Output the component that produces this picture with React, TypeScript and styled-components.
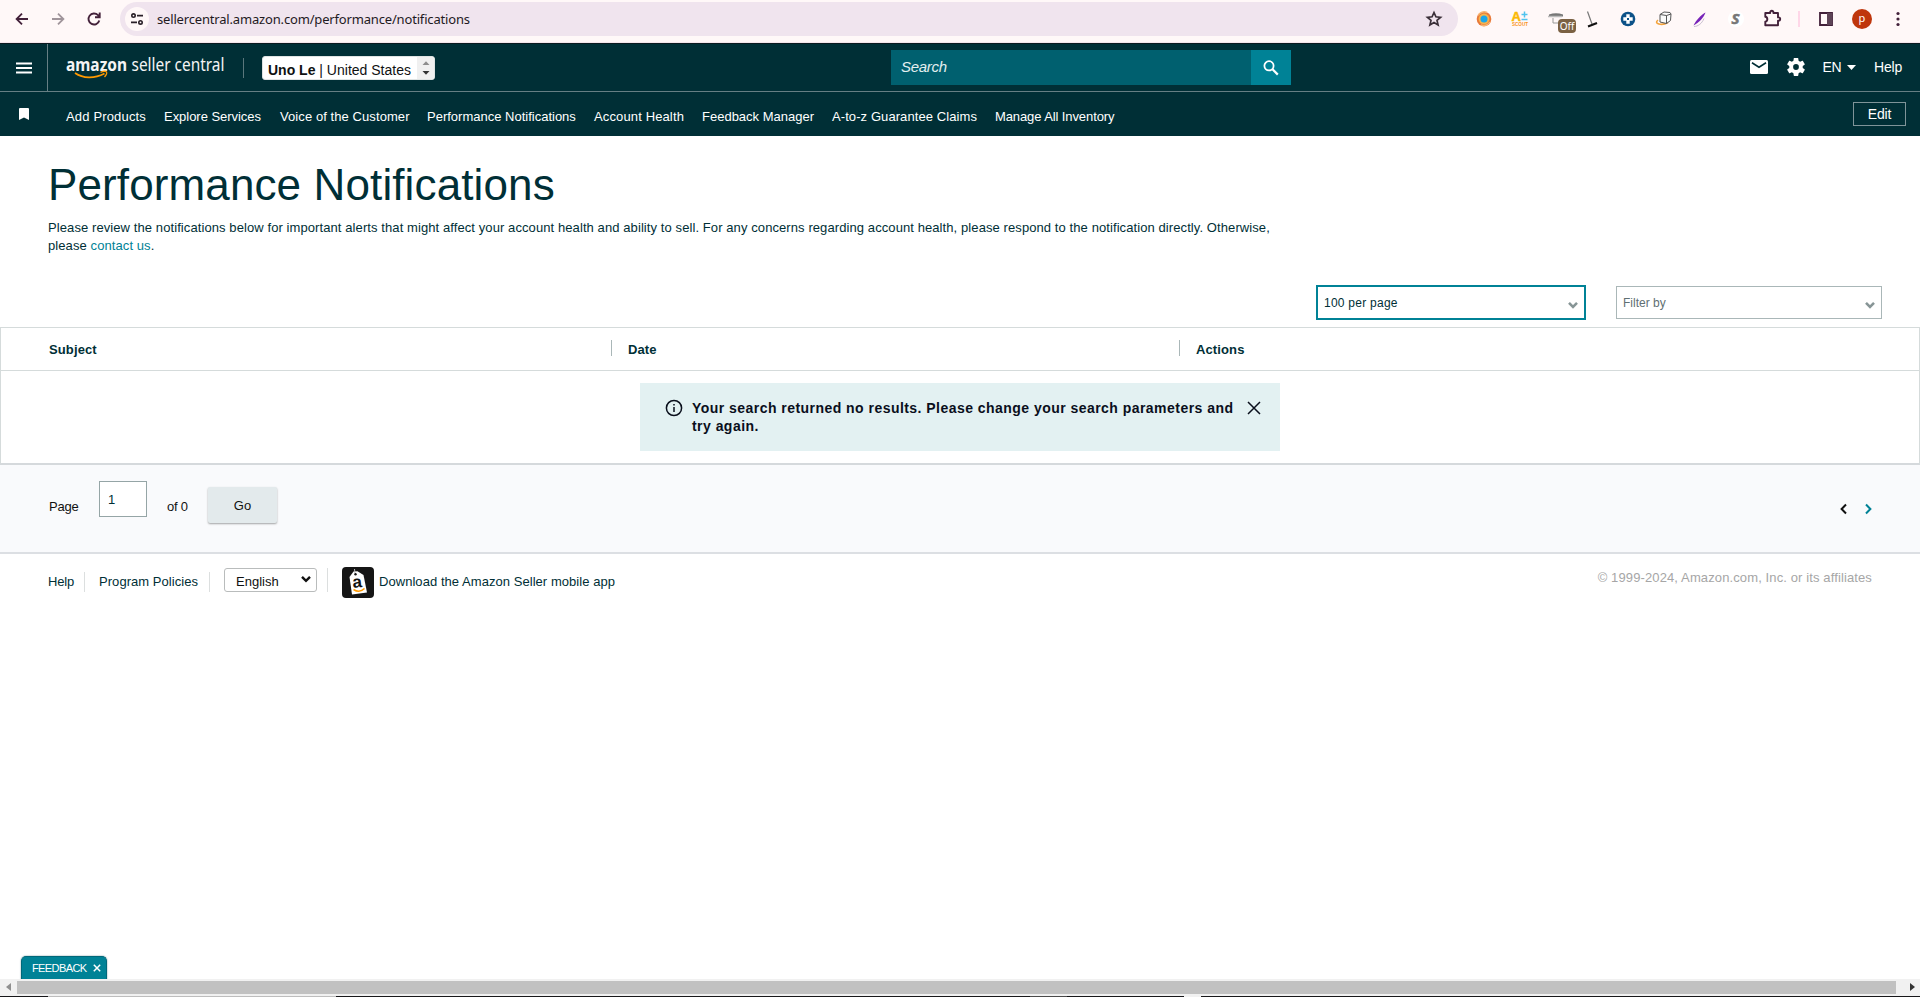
import React from "react";
import styled, { createGlobalStyle } from "styled-components";

const Global = createGlobalStyle`
  * { box-sizing: border-box; }
  body { margin: 0; background: #fff; overflow: hidden; }
  svg { display: block; flex: none; }
`;

const ink = "#002f36";
const teal = "#008296";

const Screen = styled.div`
  width: 1920px;
  height: 997px;
  display: flex;
  flex-direction: column;
  background: #fff;
  color: ${ink};
  font: 13px/18px "Liberation Sans", Arial, sans-serif;
  white-space: nowrap;
`;

const Txt = styled.span<{ $ls?: number }>`
  letter-spacing: ${(p) => p.$ls ?? 0}px;
`;

/* browser bar */
const BrowserBar = styled.div`
  height: 43px;
  flex: none;
  display: flex;
  align-items: flex-start;
  background: #fff8f8;
  border-bottom: 1px solid #f3e6ec;
`;
const NavButtons = styled.div`
  display: flex;
  width: 120px;
  padding: 9px 0 0 12px;
  gap: 16px;
`;
const AddressBar = styled.div`
  width: 1338px;
  height: 34px;
  margin-top: 2px;
  border-radius: 17px;
  background: #f0e4ee;
  display: flex;
  align-items: center;
  padding: 0 14px 0 5px;
`;
const SiteInfo = styled.div`
  width: 24px;
  height: 24px;
  border-radius: 50%;
  background: #fff8f8;
  display: grid;
  place-items: center;
  margin-right: 8px;
`;
const Url = styled.div`
  flex: 1;
  font: 13px/20px "Noto Sans", sans-serif;
  letter-spacing: -0.17px;
  color: #1f1a1e;
`;
const Extensions = styled.div`
  display: flex;
  padding-left: 8px;
  height: 38px;
`;
const ExtCell = styled.div<{ $w?: number }>`
  width: ${(p) => p.$w ?? 36}px;
  display: grid;
  place-items: center;
  position: relative;
`;
const OffBadge = styled.span`
  position: absolute;
  left: 20px;
  top: 19px;
  width: 18px;
  height: 14px;
  border-radius: 4px;
  background: #7b6143;
  color: #fff;
  font: 10px/14px "Noto Sans", sans-serif;
  text-align: center;
`;
const ExtDivider = styled.i`
  width: 2px;
  height: 16px;
  background: #ffd7e8;
`;
const Avatar = styled.div`
  width: 20px;
  height: 20px;
  border-radius: 50%;
  background: #bf360c;
  color: #fff;
  font: 11px/18px "Noto Sans", sans-serif;
  text-align: center;
`;

/* seller central header */
const TopBar = styled.header`
  height: 49px;
  flex: none;
  display: flex;
  align-items: center;
  background: ${ink};
  border-bottom: 1px solid #667f84;
  border-top: 1px solid #0b1a20;
  color: #fff;
`;
const MenuButton = styled.div`
  width: 48px;
  height: 47px;
  border-right: 1px solid #667f84;
  display: grid;
  place-items: center;
`;
const LogoWrap = styled.div`
  width: 196px;
  height: 20px;
  border-right: 1px solid #5a777c;
  padding-left: 18px;
  svg { margin-top: -6px; overflow: visible; }
`;
const AccountPicker = styled.div`
  margin-left: 18px;
  width: 173px;
  height: 24px;
  border-radius: 3px;
  background: #fff;
  color: #0f1111;
  display: flex;
  align-items: stretch;
  overflow: hidden;
  border: 1px solid #dfe3e3;
  font-size: 14px;
`;
const AccountName = styled.div`
  flex: 1;
  padding: 4px 0 0 5px;
  line-height: 18px;
`;
const Spinner = styled.div`
  width: 17px;
  background: #f0f0f0;
  display: grid;
  place-items: center;
`;
const SearchBox = styled.div`
  margin-left: 456px;
  width: 360px;
  height: 35px;
  background: #00606f;
  padding-left: 10px;
  font: italic 15px/34px "Liberation Sans", Arial, sans-serif;
  color: #e3eff0;
`;
const SearchButton = styled.div`
  width: 40px;
  height: 35px;
  background: ${teal};
  display: grid;
  place-items: center;
`;
const HeaderTools = styled.div`
  flex: 1;
  display: flex;
  align-items: center;
  justify-content: flex-end;
  padding: 0 18px 1px 0;
  font-size: 14px;
`;
const Language = styled.div`
  display: flex;
  align-items: center;
  gap: 6px;
  margin: 0 18px 0 18px;
`;
const Settings = styled.div`
  margin-left: 19px;
`;
const QuickNav = styled.nav`
  height: 44px;
  flex: none;
  display: flex;
  align-items: center;
  background: ${ink};
  color: #fff;
`;
const Bookmark = styled.div`
  width: 66px;
  padding: 0 0 1px 19px;
`;
const QuickLink = styled.a<{ $w: number; $ls: number }>`
  width: ${(p) => p.$w}px;
  padding-top: 5px;
  letter-spacing: ${(p) => p.$ls}px;
`;
const EditButton = styled.div`
  margin: 0 14px 0 auto;
  width: 53px;
  height: 24px;
  border: 1px solid #7f9499;
  font-size: 14px;
  line-height: 23px;
  text-align: center;
  letter-spacing: -0.2px;
`;

/* content */
const Title = styled.h1`
  margin: 0;
  padding: 22px 0 0 48px;
  font-size: 44px;
  font-weight: 400;
  line-height: 53px;
  letter-spacing: 0.12px;
`;
const Intro = styled.p`
  margin: 8px 0 30px;
  padding-left: 48px;
  letter-spacing: 0.089px;
  a { color: ${teal}; }
`;
const Filters = styled.div`
  display: flex;
  justify-content: flex-end;
  align-items: center;
  gap: 30px;
  padding-right: 38px;
  height: 35px;
  margin-bottom: 7px;
`;
const Select = styled.div<{ $active?: boolean }>`
  width: ${(p) => (p.$active ? 270 : 266)}px;
  height: ${(p) => (p.$active ? 35 : 33)}px;
  border: ${(p) => (p.$active ? `2px solid ${teal}` : "1px solid #aab7b8")};
  color: ${(p) => (p.$active ? ink : "#5f7073")};
  padding: 0 6px 0 6px;
  display: flex;
  align-items: center;
  justify-content: space-between;
  font-size: 12px;
  svg { margin-top: 4px; }
`;
const Table = styled.section`
  border: 1px solid #d5dbdb;
  border-bottom: 2px solid #d5d9dc;
  height: 138px;
  flex: none;
`;
const HeadRow = styled.div`
  display: grid;
  grid-template-columns: 610px 568px 1fr;
  height: 43px;
  align-items: center;
  border-bottom: 1px solid #d5dbdb;
  font-weight: 700;
`;
const HeadCell = styled.div<{ $first?: boolean }>`
  height: 16px;
  line-height: 19px;
  border-left: ${(p) => (p.$first ? "0" : "1px solid #aab7b8")};
  padding-left: ${(p) => (p.$first ? 48 : 16)}px;
  letter-spacing: 0.12px;
  margin-top: -3px;
`;
const Notice = styled.div`
  width: 640px;
  height: 68px;
  margin: 12px auto 0 639px;
  background: #e3f1f2;
  color: #0a0f1c;
  display: flex;
  align-items: flex-start;
  padding: 16px 18px 0 25px;
  font-weight: 700;
  font-size: 14px;
`;
const NoticeText = styled.div`
  width: 555px;
  margin-left: 9px;
  letter-spacing: 0.46px;
`;
const Pager = styled.div`
  height: 89px;
  flex: none;
  display: flex;
  align-items: flex-start;
  background: #f9fafc;
  border-bottom: 2px solid #dcdfe3;
  color: #111;
  padding-left: 49px;
`;
const PagerLabel = styled.span<{ $w: number }>`
  width: ${(p) => p.$w}px;
  padding-top: 33px;
  letter-spacing: -0.2px;
`;
const PageInput = styled.div`
  width: 48px;
  height: 36px;
  margin: 16px 20px 0 0;
  border: 1px solid #95a5a6;
  background: #fff;
  color: ${ink};
  padding: 9px 0 0 8px;
`;
const GoButton = styled.div`
  width: 69px;
  height: 36px;
  margin-top: 22px;
  border-radius: 2px;
  background: #e3eaec;
  box-shadow: 0 1px 2px rgba(0, 0, 0, 0.35);
  line-height: 37px;
  text-align: center;
`;
const PageArrows = styled.div`
  display: flex;
  gap: 18px;
  margin: 38px 48px 0 auto;
`;
const Footer = styled.footer`
  display: flex;
  align-items: flex-start;
  padding: 13px 48px 0;
  flex: 1;
`;
const FootItem = styled.div<{ $w: number; $pad?: number }>`
  width: ${(p) => p.$w}px;
  padding-left: ${(p) => p.$pad ?? 0}px;
  height: 20px;
  margin-top: 5px;
  border-right: 1px solid #dcdfdf;
  line-height: 20px;
`;
const LangSelect = styled.div`
  width: 93px;
  height: 24px;
  margin: 1px 10px 0 14px;
  border: 1px solid #b9bcbc;
  border-radius: 3px;
  color: #0f1111;
  display: flex;
  align-items: center;
  justify-content: space-between;
  padding: 4px 5px 0 11px;
  overflow: hidden;
  svg { margin-top: -6px; }
`;
const FootDivider = styled.i`
  width: 1px;
  height: 24px;
  margin: 1px 14px 0 0;
  background: #dcdfdf;
`;
const AppLink = styled.div`
  display: flex;
  gap: 5px;
  letter-spacing: 0.05px;
  line-height: 30px;
`;
const Copyright = styled.div`
  margin: 1px 0 0 auto;
  color: #a6a6a6;
  line-height: 20px;
  letter-spacing: 0.118px;
`;
const FeedbackTab = styled.div`
  width: 86px;
  height: 23px;
  margin-left: 21px;
  flex: none;
  border: 1px solid #00687a;
  border-bottom: 0;
  border-radius: 5px 5px 0 0;
  background: ${teal};
  color: #fff;
  box-shadow: 0 0 1px 1px #d8e2e3;
  display: flex;
  align-items: center;
  gap: 6px;
  padding-left: 10px;
  font-size: 11px;
`;
const Scrollbar = styled.div`
  height: 17px;
  flex: none;
  display: flex;
  align-items: center;
  justify-content: space-between;
  background: #f1f1f1;
  padding: 0 5px 1px 6px;
`;
const Thumb = styled.div`
  width: 1879px;
  flex: none;
  height: 13px;
  background: #c1c1c1;
  margin: 0 auto 0 6px;
`;
const TaskbarEdge = styled.div`
  height: 1px;
  flex: none;
  background: linear-gradient(90deg, #17171a 48px, #bdbdbd 48px 336px, #17171a 336px 1030px, #4a4a4a 1030px 1067px, #17171a 1067px 1184px, #f1f1f1 1184px 1201px, #17171a 1201px);
`;

const Chevron = ({ color = "#879596", sw = 2.6 }) => (
  <svg width="10" height="8" viewBox="0 0 10 8" fill="none" stroke={color} strokeWidth={sw}>
    <path d="M1 1.8 5 5.8 9 1.8" />
  </svg>
);

const Logo = () => (
  <svg width="162" height="32" viewBox="0 0 162 32" fill="#f4f4f4" fontFamily="Noto Sans, sans-serif">
    <text x="0" y="18.5" fontSize="18" fontWeight="700" textLength="61" lengthAdjust="spacingAndGlyphs">amazon</text>
    <text x="65.500" y="18.5" fontSize="18" textLength="93" lengthAdjust="spacingAndGlyphs">seller central</text>
    <path d="M9 21C17 26.500 28 27 38.500 21.500" fill="none" stroke="#f90" strokeWidth="1.700" />
    <path d="M34.500 20.300C37 19.300 40 19.200 40.500 20S39.800 23.500 38.500 25" fill="none" stroke="#f90" strokeWidth="1.300" />
  </svg>
);

const links: [string, number, number][] = [
  ["Add Products", 98, 0.163],
  ["Explore Services", 116, -0.034],
  ["Voice of the Customer", 147, 0.08],
  ["Performance Notifications", 167, 0],
  ["Account Health", 108, 0.131],
  ["Feedback Manager", 130, 0],
  ["A-to-z Guarantee Claims", 163, 0.085],
  ["Manage All Inventory", 125, -0.1],
];

export default function App() {
  return (
    <Screen>
      <Global />
      <BrowserBar>
        <NavButtons>
          <svg width="20" height="20" viewBox="0 0 20 20" fill="none" stroke="#43213a" strokeWidth="1.800"><path d="M16 10H5M10 4.600 4.600 10l5.400 5.400" /></svg>
          <svg width="20" height="20" viewBox="0 0 20 20" fill="none" stroke="#a0959b" strokeWidth="1.800"><path d="M4 10h11M10 4.600 15.400 10 10 15.400" /></svg>
          <svg width="20" height="20" viewBox="0 0 20 20" fill="none" stroke="#43213a" strokeWidth="1.900"><path d="M15.300 11.500A5.500 5.500 0 1 1 14 6.200L15.600 8M15.700 3.500V8.200H11" /></svg>
        </NavButtons>
        <AddressBar>
          <SiteInfo>
            <svg width="14" height="14" viewBox="0 0 14 14" fill="none" stroke="#2a2028" strokeWidth="1.600"><circle cx="3.500" cy="3.600" r="1.700" /><path d="M7 3.600h6M1 10.400h6" /><circle cx="10.500" cy="10.400" r="1.700" /></svg>
          </SiteInfo>
          <Url>sellercentral.amazon.com/performance/notifications</Url>
          <svg width="20" height="20" viewBox="0 0 20 20" fill="none" stroke="#3a2f38" strokeWidth="1.700"><path d="m10 3.500 1.900 4.300 4.700.5-3.600 3.100 1.100 4.600L10 13.600 5.900 16 7 11.400 3.400 8.300l4.700-.5z" /></svg>
        </AddressBar>
        <Extensions>
          <ExtCell>
            <svg width="16" height="16" viewBox="0 0 16 16"><circle cx="8" cy="8" r="7.300" fill="#e8793a" /><circle cx="8" cy="8" r="5.400" fill="#f7b34d" /><circle cx="8" cy="8" r="3.500" fill="#1ba6ea" /><path d="M2 4.500a7 7 0 0 1 9-3M14 11a7 7 0 0 1-9 3" stroke="#f7b573" strokeWidth="1.500" fill="none" /></svg>
          </ExtCell>
          <ExtCell>
            <svg width="18" height="18" viewBox="0 0 18 18" fontFamily="Liberation Sans, sans-serif" fontWeight="700"><text x="0.500" y="11" fontSize="13" fill="#fbb904" stroke="#fbb904" strokeWidth=".5">A</text><path d="M10.500 4.500h6M13.500 1.500v6M10.500 9.500h6" stroke="#4fc3ee" strokeWidth="1.500" /><text x="1" y="16" fontSize="5.500" textLength="16" lengthAdjust="spacingAndGlyphs" fill="#f9931b">SCOUT</text></svg>
          </ExtCell>
          <ExtCell>
            <svg width="18" height="18" viewBox="0 0 18 18"><path d="M2 4.500Q9 2 16 4.500v2H2z" fill="#777" /><path d="M1 6.500h14" stroke="#bbb" strokeWidth="1.500" /><path d="M6 8v5h8" stroke="#999" fill="none" /></svg>
            <OffBadge>Off</OffBadge>
          </ExtCell>
          <ExtCell>
            <svg width="18" height="18" viewBox="0 0 18 18"><path d="M4.500 1.500 9 14" stroke="#777" strokeWidth="1.200" /><path d="M5 16.500 14 13" stroke="#111" strokeWidth="2.200" /></svg>
          </ExtCell>
          <ExtCell>
            <svg width="16" height="16" viewBox="0 0 16 16"><circle cx="8" cy="8" r="7.300" fill="#0d5288" /><path d="M6.300 3.300h3.400v3h3v3.400h-3v3H6.300v-3h-3V6.300h3z" fill="#fff" /><path d="M7 7h2v2H7z" fill="#0d5288" /></svg>
          </ExtCell>
          <ExtCell>
            <svg width="18" height="18" viewBox="0 0 18 18" fill="none"><path d="M3 10c-5 4 4 6 10 2.500" stroke="#f3a33c" strokeWidth="1.600" /><path d="M5 4.500 9 2l6 .5 1 1.500-.5 6.500-4 3L5 12zM5 4.500l6.500 1L16 4M11.500 5.500v8" fill="#fafafa" stroke="#555" /></svg>
          </ExtCell>
          <ExtCell>
            <svg width="18" height="18" viewBox="0 0 18 18"><path d="M14.500 2.500C10 5 5 10 2.500 15.500 8 12.500 12.500 8 14.500 2.500z" fill="#7723b8" /><path d="M3 16.500c4 0 8-3 10-8" stroke="#cabfd1" fill="none" /></svg>
          </ExtCell>
          <ExtCell>
            <svg width="18" height="18" viewBox="0 0 18 18"><circle cx="9" cy="9" r="8" fill="#fff" /><text x="4.500" y="14" fontFamily="Noto Sans, sans-serif" fontStyle="italic" fontWeight="700" fontSize="15" fill="#777" stroke="#777" strokeWidth=".6">S</text></svg>
          </ExtCell>
          <ExtCell>
            <svg width="20" height="20" viewBox="0 0 20 20" fill="none" stroke="#43213a" strokeWidth="1.900" strokeLinejoin="round"><path d="M3.300 4H8.200V3.300a1.600 1.600 0 0 1 3.200 0V4H16V8.400h.600a1.600 1.600 0 0 1 0 3.200H16V16.300H3.300V12.600c2.700-.3 2.700-4.500 0-4.800z" /></svg>
          </ExtCell>
          <ExtCell $w={18}><ExtDivider /></ExtCell>
          <ExtCell>
            <svg width="16" height="16" viewBox="0 0 16 16"><path d="M2 2h12v12H2z" fill="none" stroke="#43213a" strokeWidth="1.800" /><path d="M9 2h5v12H9z" fill="#5e4457" /></svg>
          </ExtCell>
          <ExtCell><Avatar>p</Avatar></ExtCell>
          <ExtCell>
            <svg width="4" height="16" viewBox="0 0 4 16" fill="#43213a"><circle cx="2" cy="2.500" r="1.600" /><circle cx="2" cy="8" r="1.600" /><circle cx="2" cy="13.500" r="1.600" /></svg>
          </ExtCell>
        </Extensions>
      </BrowserBar>

      <TopBar>
        <MenuButton>
          <svg width="16" height="12" viewBox="0 0 16 12" stroke="#fff" strokeWidth="1.800"><path d="M0 1.500h16M0 6h16M0 10.500h16" /></svg>
        </MenuButton>
        <LogoWrap><Logo /></LogoWrap>
        <AccountPicker>
          <AccountName><b>Uno Le</b> | United States</AccountName>
          <Spinner>
            <svg width="8" height="14" viewBox="0 0 8 14"><path d="M.5 4 4 .3 7.500 4z" fill="#8d8d8d" /><path d="M.5 10 4 13.700 7.500 10z" fill="#333" /></svg>
          </Spinner>
        </AccountPicker>
        <SearchBox><Txt $ls={-0.3}>Search</Txt></SearchBox>
        <SearchButton>
          <svg width="16" height="16" viewBox="0 0 16 16" fill="none" stroke="#fff"><circle cx="6" cy="5.800" r="4.600" strokeWidth="1.800" /><path d="m9.500 9.300 5.300 5.300" strokeWidth="2.200" /></svg>
        </SearchButton>
        <HeaderTools>
          <svg width="18" height="14" viewBox="0 0 18 14"><rect width="18" height="14" rx="1.500" fill="#fff" /><path d="m2 2.800 7 4.400 7-4.400" fill="none" stroke={ink} strokeWidth="1.600" /></svg>
          <Settings>
            <svg width="18" height="18" viewBox="2 2 20 20" fill="#fff"><path d="M19.430 12.980c.04-.32.070-.64.070-.98s-.03-.66-.07-.98l2.110-1.650c.19-.15.240-.42.120-.64l-2-3.460c-.12-.22-.39-.3-.61-.22l-2.490 1c-.52-.4-1.080-.73-1.690-.98l-.38-2.650C14.460 2.180 14.250 2 14 2h-4c-.25 0-.46.180-.49.420l-.38 2.650c-.61.250-1.170.590-1.690.980l-2.490-1c-.23-.09-.49 0-.61.220l-2 3.460c-.13.220-.07.490.120.640l2.110 1.650c-.04.320-.07.650-.07.980s.03.660.070.980l-2.110 1.650c-.19.150-.24.420-.12.640l2 3.460c.12.220.39.300.61.220l2.490-1c.52.400 1.080.730 1.690.980l.38 2.650c.03.240.24.420.49.420h4c.25 0 .46-.18.490-.42l.38-2.650c.61-.25 1.170-.59 1.690-.98l2.490 1c.23.090.49 0 .61-.22l2-3.460c.12-.22.070-.49-.12-.64l-2.110-1.650zM12 15.200a3.200 3.200 0 1 1 0-6.400 3.200 3.200 0 0 1 0 6.400z" /></svg>
          </Settings>
          <Language>
            <Txt $ls={-0.5}>EN</Txt>
            <svg width="9" height="5" viewBox="0 0 9 5" fill="#fff"><path d="M0 0h9L4.500 5z" /></svg>
          </Language>
          <Txt $ls={-0.2}>Help</Txt>
        </HeaderTools>
      </TopBar>

      <QuickNav>
        <Bookmark>
          <svg width="10" height="12" viewBox="0 0 10 12" fill="#fff"><path d="M1 0h8a1 1 0 0 1 1 1v11L5 9.500 0 12V1a1 1 0 0 1 1-1z" /></svg>
        </Bookmark>
        {links.map(([t, w, ls]) => (
          <QuickLink key={t} $w={w} $ls={ls}>{t}</QuickLink>
        ))}
        <EditButton>Edit</EditButton>
      </QuickNav>

      <Title>Performance Notifications</Title>
      <Intro>
        Please review the notifications below for important alerts that might affect your account health and ability to sell. For any concerns regarding account health, please respond to the notification directly. Otherwise,
        <br />
        please <a>contact us</a>.
      </Intro>

      <Filters>
        <Select $active><Txt $ls={0.25}>100 per page</Txt><Chevron /></Select>
        <Select><Txt>Filter by</Txt><Chevron /></Select>
      </Filters>

      <Table>
        <HeadRow>
          <HeadCell $first>Subject</HeadCell>
          <HeadCell>Date</HeadCell>
          <HeadCell>Actions</HeadCell>
        </HeadRow>
        <Notice>
          <svg width="18" height="18" viewBox="0 0 18 18" fill="none" stroke="#0a0f1c" strokeWidth="1.500"><circle cx="9" cy="9" r="7.600" /><path d="M9 8v5M9 5v1.600" /></svg>
          <NoticeText>
            Your search returned no results. Please change your search parameters and
            <br />
            try again.
          </NoticeText>
          <svg width="14" height="18" viewBox="0 0 14 18" stroke="#0a0f1c" strokeWidth="1.500"><path d="m1 3 12 12M13 3 1 15" /></svg>
        </Notice>
      </Table>

      <Pager>
        <PagerLabel $w={50}>Page</PagerLabel>
        <PageInput>1</PageInput>
        <PagerLabel $w={41}>of 0</PagerLabel>
        <GoButton>Go</GoButton>
        <PageArrows>
          <svg width="7" height="12" viewBox="0 0 7 12" fill="none" stroke="#111" strokeWidth="2"><path d="M6 1.500 1.600 6 6 10.500" /></svg>
          <svg width="7" height="12" viewBox="0 0 7 12" fill="none" stroke={teal} strokeWidth="2"><path d="M1 1.500 5.400 6 1 10.500" /></svg>
        </PageArrows>
      </Pager>

      <Footer>
        <FootItem $w={37}><Txt $ls={-0.18}>Help</Txt></FootItem>
        <FootItem $w={125} $pad={14}><Txt $ls={0.05}>Program Policies</Txt></FootItem>
        <LangSelect>English<Chevron color="#111" sw={2.4} /></LangSelect>
        <FootDivider />
        <AppLink>
          <svg width="32" height="31" viewBox="0 0 32 31">
            <rect width="32" height="31" rx="4" fill="#151515" />
            <path d="m7.500 10 4-5.500 4-.300L21.500 8 25 25.500 10 27.500z" fill="#fff" />
            <path d="M13 6.500 12.500 2" stroke="#bbb" />
            <circle cx="13.500" cy="7.300" r="1.200" fill="#151515" />
            <text x="10.500" y="20.500" fontFamily="Liberation Sans, sans-serif" fontWeight="700" fontSize="17" fill="#111" transform="rotate(-6 15 16)">a</text>
            <path d="M11.500 22.500c4 2.500 8 2 11-1" fill="none" stroke="#f90" strokeWidth="1.500" />
          </svg>
          Download the Amazon Seller mobile app
        </AppLink>
        <Copyright>© 1999-2024, Amazon.com, Inc. or its affiliates</Copyright>
      </Footer>

      <FeedbackTab>
        <Txt $ls={-0.6}>FEEDBACK</Txt>
        <svg width="8" height="8" viewBox="0 0 8 8" stroke="#fff" strokeWidth="1.500"><path d="m.8.800 6.400 6.400M7.200.8.800 7.200" /></svg>
      </FeedbackTab>
      <Scrollbar>
        <svg width="5" height="8" viewBox="0 0 5 8" fill="#8f8f8f"><path d="M5 0v8L0 4z" /></svg>
        <Thumb />
        <svg width="5" height="8" viewBox="0 0 5 8" fill="#333"><path d="M0 0v8l5-4z" /></svg>
      </Scrollbar>
      <TaskbarEdge />
    </Screen>
  );
}
